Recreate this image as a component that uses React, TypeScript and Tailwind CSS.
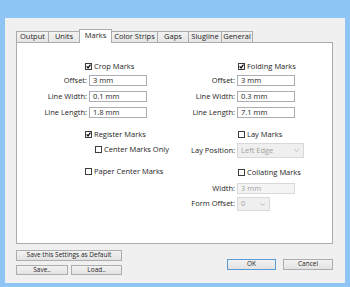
import React from "react";

function Check({ checked }: { checked?: boolean }) {
  return (
    <span className="w-[7px] h-[7px] border border-[#3c3c3c] bg-white flex items-center justify-center shrink-0">
      {checked && (
        <svg width="5" height="5" viewBox="0 0 5 5">
          <path d="M0.6 2.4 L2 3.9 L4.5 0.6" stroke="#111" strokeWidth="1.3" fill="none" />
        </svg>
      )}
    </span>
  );
}

function CheckRow({ label, checked, ml, mt }: { label: string; checked?: boolean; ml: string; mt: string }) {
  return (
    <div className={`flex items-center h-[11px] gap-[2px] ${ml} ${mt}`}>
      <Check checked={checked} />
      <span className="text-[7.5px] leading-none text-[#1e1e1e] whitespace-nowrap">{label}</span>
    </div>
  );
}

function Field({ label, value, mt, disabled }: { label: string; value: string; mt: string; disabled?: boolean }) {
  return (
    <div className={`flex items-center h-[11px] ${mt}`}>
      <span className="w-[70px] mr-[2px] text-right text-[7.5px] leading-none text-[#1e1e1e] whitespace-nowrap">{label}</span>
      <div
        className={`w-[58px] h-[11px] border flex items-center pl-[3px] text-[7.5px] leading-none ${
          disabled ? "border-[#d9d9d9] bg-[#f4f4f4] text-[#a0a0a0]" : "border-[#abadb3] bg-white text-[#1e1e1e]"
        }`}
      >
        {value}
      </div>
    </div>
  );
}

function SelectField({ label, value, mt, w, h }: { label: string; value: string; mt: string; w: string; h: string }) {
  return (
    <div className={`flex items-center ${h} ${mt}`}>
      <span className="w-[70px] mr-[2px] text-right text-[7.5px] leading-none text-[#1e1e1e] whitespace-nowrap">{label}</span>
      <div className={`${w} ${h} border border-[#d9d9d9] bg-[#efefef] flex items-center justify-between pl-[3px] pr-[4px] text-[7.5px] leading-none text-[#a0a0a0]`}>
        <span>{value}</span>
        <svg width="5" height="3" viewBox="0 0 5 3">
          <path d="M0.3 0.3 L2.5 2.5 L4.7 0.3" stroke="#b0b0b0" strokeWidth="0.8" fill="none" />
        </svg>
      </div>
    </div>
  );
}

const tabs = [
  { t: "Output", w: "w-[33px]" },
  { t: "Units", w: "w-[32px]" },
  { t: "Marks", w: "w-[33px]", sel: true },
  { t: "Color Strips", w: "w-[47px]" },
  { t: "Gaps", w: "w-[32px]" },
  { t: "Slugline", w: "w-[34px]" },
  { t: "General", w: "w-[32px]" },
];

function Btn({ label, w, h, def }: { label: string; w: string; h: string; def?: boolean }) {
  return (
    <div
      className={`${w} ${h} border ${
        def ? "border-[#5b9bd5]" : "border-[#adadad]"
      } bg-gradient-to-b from-[#f2f2f2] to-[#e3e3e3] flex items-center justify-center text-[6.5px] leading-none text-[#1e1e1e] whitespace-nowrap`}
    >
      {label}
    </div>
  );
}

export default function App() {
  return (
    <div className="w-[350px] h-[287px] bg-[#8ec5f4] pt-[18px] pl-[5px] pr-[5px] pb-[4px] font-['Open_Sans','Noto_Sans',sans-serif] overflow-hidden">
      <div className="w-[340px] h-[265px] bg-[#f0f0f0] pt-[11px] pl-[11px] flex flex-col">
        {/* tabs */}
        <div className="flex items-end h-[13px]">
          {tabs.map((tb, i) => (
            <div
              key={tb.t}
              className={`${tb.w} ${i > 0 ? "-ml-px" : ""} border-t border-l border-r border-[#acacac] flex items-center justify-center text-[7.5px] leading-none text-[#1e1e1e] whitespace-nowrap ${
                tb.sel ? "h-[14px] bg-white relative z-10 -mb-px pb-[1px]" : "h-[11px] bg-gradient-to-b from-[#f2f2f2] to-[#e6e6e6]"
              }`}
            >
              {tb.t}
            </div>
          ))}
        </div>
        {/* panel */}
        <div className="w-[317px] h-[202px] border border-[#acacac] bg-white flex pt-[18px]">
          <div className="flex flex-col w-[130px] shrink-0">
            <CheckRow label="Crop Marks" checked ml="ml-[68px]" mt="mt-0" />
            <Field label="Offset:" value="3 mm" mt="mt-[3px]" />
            <Field label="Line Width:" value="0.1 mm" mt="mt-[5px]" />
            <Field label="Line Length:" value="1.8 mm" mt="mt-[5px]" />
            <CheckRow label="Register Marks" checked ml="ml-[68px]" mt="mt-[11px]" />
            <CheckRow label="Center Marks Only" ml="ml-[78px]" mt="mt-[4px]" />
            <CheckRow label="Paper Center Marks" ml="ml-[68px]" mt="mt-[11px]" />
          </div>
          <div className="flex flex-col ml-[18px]">
            <CheckRow label="Folding Marks" checked ml="ml-[73px]" mt="mt-0" />
            <Field label="Offset:" value="3 mm" mt="mt-[3px]" />
            <Field label="Line Width:" value="0.3 mm" mt="mt-[5px]" />
            <Field label="Line Length:" value="7.1 mm" mt="mt-[5px]" />
            <CheckRow label="Lay Marks" ml="ml-[73px]" mt="mt-[11px]" />
            <SelectField label="Lay Position:" value="Left Edge" mt="mt-[3px]" w="w-[67px]" h="h-[15px]" />
            <CheckRow label="Collating Marks" ml="ml-[73px]" mt="mt-[9px]" />
            <Field label="Width:" value="3 mm" mt="mt-[5px]" disabled />
            <SelectField label="Form Offset:" value="0" mt="mt-[3px]" w="w-[33px]" h="h-[14px]" />
          </div>
        </div>
        {/* bottom buttons */}
        <div className="flex justify-between pr-[12px] mt-[6px]">
          <div className="flex flex-col">
            <Btn label="Save this Settings as Default" w="w-[106px]" h="h-[11px]" />
            <div className="flex gap-[3px] mt-[4px]">
              <Btn label="Save.." w="w-[52px]" h="h-[10px]" />
              <Btn label="Load.." w="w-[51px]" h="h-[10px]" />
            </div>
          </div>
          <div className="flex gap-[7px] mt-[9px]">
            <Btn label="OK" w="w-[49px]" h="h-[11px]" def />
            <Btn label="Cancel" w="w-[50px]" h="h-[11px]" />
          </div>
        </div>
      </div>
    </div>
  );
}
